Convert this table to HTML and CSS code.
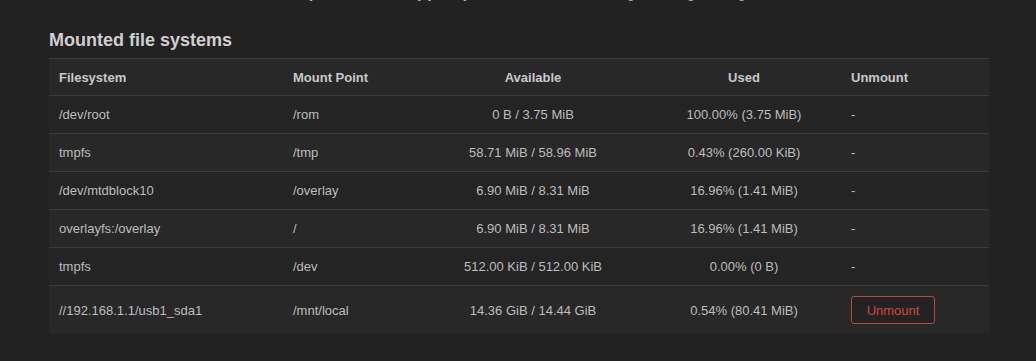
FILE: index.html
```html
<!DOCTYPE html>
<html lang="en">
<head>
<meta charset="utf-8">
<title>Mounted file systems</title>
<link rel="stylesheet" href="styles.css">
</head>
<body>
<div class="page">
  <p class="intro">Mounted file systems are listed by your system and are mounted using the configuration given below.</p>
  <section class="section">
    <h3 class="title">Mounted file systems</h3>
    <table class="table">
      <colgroup>
        <col class="c-fs"><col class="c-mp"><col class="c-av"><col class="c-used"><col class="c-um">
      </colgroup>
      <thead>
        <tr>
          <th>Filesystem</th>
          <th>Mount Point</th>
          <th class="center">Available</th>
          <th class="center">Used</th>
          <th>Unmount</th>
        </tr>
      </thead>
      <tbody>
        <tr><td>/dev/root</td><td>/rom</td><td class="center">0 B / 3.75 MiB</td><td class="center">100.00% (3.75 MiB)</td><td>-</td></tr>
        <tr><td>tmpfs</td><td>/tmp</td><td class="center">58.71 MiB / 58.96 MiB</td><td class="center">0.43% (260.00 KiB)</td><td>-</td></tr>
        <tr><td>/dev/mtdblock10</td><td>/overlay</td><td class="center">6.90 MiB / 8.31 MiB</td><td class="center">16.96% (1.41 MiB)</td><td>-</td></tr>
        <tr><td>overlayfs:/overlay</td><td>/</td><td class="center">6.90 MiB / 8.31 MiB</td><td class="center">16.96% (1.41 MiB)</td><td>-</td></tr>
        <tr><td>tmpfs</td><td>/dev</td><td class="center">512.00 KiB / 512.00 KiB</td><td class="center">0.00% (0 B)</td><td>-</td></tr>
        <tr class="last"><td>//192.168.1.1/usb1_sda1</td><td>/mnt/local</td><td class="center">14.36 GiB / 14.44 GiB</td><td class="center">0.54% (80.41 MiB)</td><td><button class="btn-unmount" type="button">Unmount</button></td></tr>
      </tbody>
    </table>
  </section>
</div>
</body>
</html>
```

FILE: styles.css
```css
html, body {
  margin: 0;
  padding: 0;
  background: #222222;
}

body {
  font-family: "Liberation Sans", Arial, sans-serif;
  font-size: 13px;
  color: #bdbdbd;
  overflow: hidden;
}

.page {
  padding: 0 47px 0 49px;
}

.intro {
  margin: -13px 0 0 0;
  height: 14px;
  line-height: 14px;
  text-align: center;
  color: #bbbbbb;
  white-space: nowrap;
}

.section {
  padding-top: 29px;
}

.title {
  margin: 0 0 8px 0;
  font-size: 18px;
  line-height: 20px;
  font-weight: bold;
  color: #cfcfcf;
}

.table {
  width: 940px;
  border-collapse: collapse;
  table-layout: fixed;
}

.c-fs { width: 234px; }
.c-mp { width: 136px; }
.c-av { width: 228px; }
.c-used { width: 194px; }
.c-um { width: 148px; }

.table th,
.table td {
  padding: 9px 10px;
  line-height: 19px;
  text-align: left;
  white-space: nowrap;
}

.table th {
  padding-bottom: 8px;
  font-weight: bold;
  color: #c8c8c8;
  background: #282828;
  border-top: 1px solid #3c3c3c;
  border-bottom: 1px solid #3c3c3c;
}

.table td {
  border-top: 1px solid #3c3c3c;
}

.table tbody tr:first-child td {
  border-top: none;
}

.table tbody tr:nth-child(odd) td {
  background: #242424;
}

.table tbody tr:nth-child(even) td {
  background: #282828;
}

.table .center {
  text-align: center;
}

.table tr.last td {
  padding-top: 10px;
  padding-bottom: 9px;
}

.btn-unmount {
  box-sizing: border-box;
  height: 28px;
  width: 84px;
  padding: 0 10px;
  font-family: "Liberation Sans", Arial, sans-serif;
  font-size: 13px;
  color: #d04545;
  background: #232323;
  border: 1px solid #c24545;
  border-radius: 3px;
  vertical-align: middle;
}
```
